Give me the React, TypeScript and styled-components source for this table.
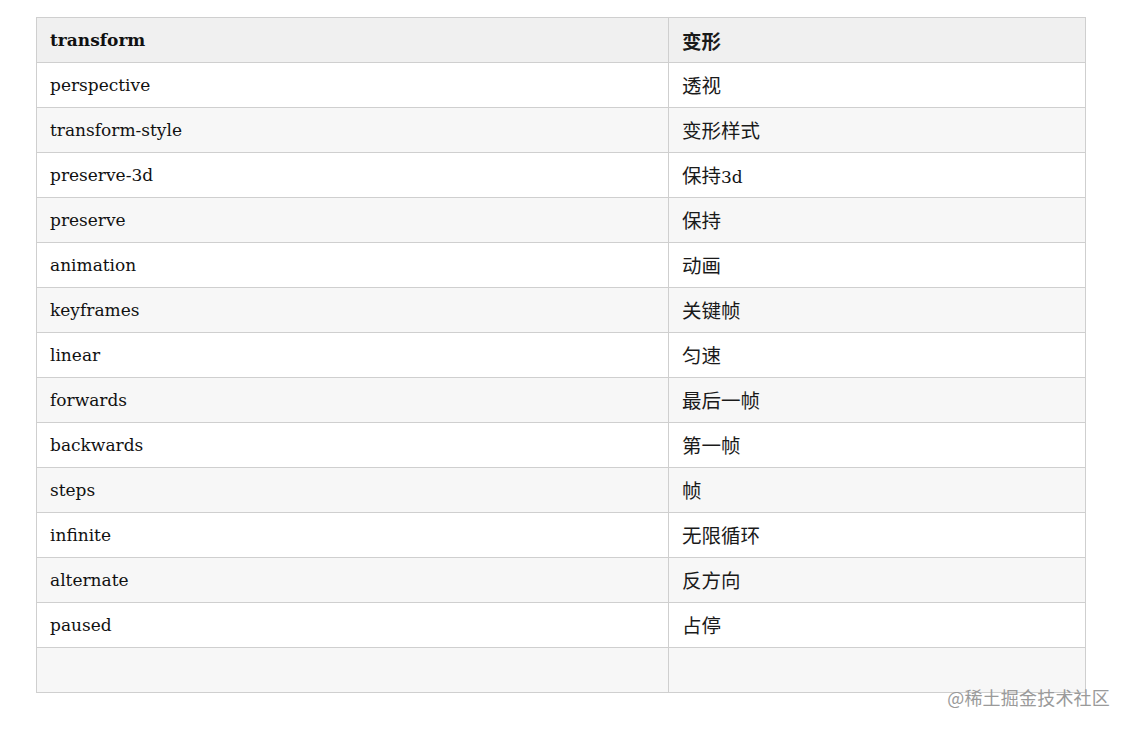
import styled, { createGlobalStyle } from "styled-components";

const GlobalStyle = createGlobalStyle`
  body {
    margin: 0;
    background: #fff;
  }
`;

const rows: [string, string][] = [
  ["perspective", "透视"],
  ["transform-style", "变形样式"],
  ["preserve-3d", "保持3d"],
  ["preserve", "保持"],
  ["animation", "动画"],
  ["keyframes", "关键帧"],
  ["linear", "匀速"],
  ["forwards", "最后一帧"],
  ["backwards", "第一帧"],
  ["steps", "帧"],
  ["infinite", "无限循环"],
  ["alternate", "反方向"],
  ["paused", "占停"],
  ["", ""],
];

// split text into CJK / latin runs so each gets its own size
function Mixed({ text }: { text: string }) {
  const parts = text.match(/[\u4e00-\u9fff]+|[^\u4e00-\u9fff]+/g) || [];
  return (
    <>
      {parts.map((p, i) =>
        /[\u4e00-\u9fff]/.test(p) ? <Han key={i}>{p}</Han> : <span key={i}>{p}</span>
      )}
    </>
  );
}

export default function App() {
  return (
    <>
      <GlobalStyle />
      <Page>
        <Table>
          <thead>
            <tr>
              <Th $w={632}>transform</Th>
              <Th>
                <Mixed text="变形" />
              </Th>
            </tr>
          </thead>
          <tbody>
            {rows.map(([en, zh], i) => (
              <Row key={i} $striped={i % 2 === 1}>
                <Td>{en}</Td>
                <Td>
                  <Mixed text={zh} />
                </Td>
              </Row>
            ))}
          </tbody>
        </Table>
        <Watermark>@稀土掘金技术社区</Watermark>
      </Page>
    </>
  );
}

const Page = styled.div`
  position: relative;
  width: 1132px;
  height: 730px;
  padding: 17px 0 0 36px;
  box-sizing: border-box;
`;

const Table = styled.table`
  border-collapse: collapse;
  width: 1050px;
  table-layout: fixed;
  font-family: "DejaVu Serif", "Noto Sans CJK SC", serif;
  font-size: 17px;
  color: #111;
`;

const Th = styled.th<{ $w?: number }>`
  width: ${(p) => (p.$w ? `${p.$w}px` : "auto")};
  height: 45px;
  padding: 0 13px;
  text-align: left;
  font-weight: bold;
  background: #f0f0f0;
  border: 1px solid #cfcfcf;
  box-sizing: border-box;
`;

const Row = styled.tr<{ $striped: boolean }>`
  background: ${(p) => (p.$striped ? "#f7f7f7" : "#fff")};
`;

const Td = styled.td`
  height: 45px;
  padding: 0 13px;
  border: 1px solid #cfcfcf;
  box-sizing: border-box;
  line-height: 1.2;
`;

const Han = styled.span`
  font-family: "Noto Sans CJK SC", sans-serif;
  font-size: 19.5px;
  color: #1a1a1a;
`;

const Watermark = styled.div`
  position: absolute;
  right: 22px;
  top: 684px;
  font-family: "Noto Sans CJK SC", sans-serif;
  font-size: 18px;
  color: #9a9a9a;
  letter-spacing: 0.2px;
`;
